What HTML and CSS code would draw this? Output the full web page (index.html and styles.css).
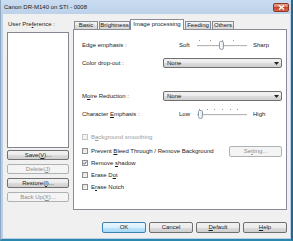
FILE: index.html
```html
<!DOCTYPE html>
<html>
<head>
<meta charset="utf-8">
<link rel="stylesheet" href="styles.css">
</head>
<body>
<div class="window">
  <div class="titlebar">
    <span class="title">Canon DR-M140 on STI - 0008</span>
    <span class="close"><svg width="7" height="5" viewBox="0 0 7 5"><path d="M1 0.5 L6 4.5 M6 0.5 L1 4.5" stroke="#fff" stroke-width="1.4"/></svg></span>
  </div>
  <div class="client">
    <div class="main">
      <div class="side">
        <div class="side-label">User Pre<u>f</u>erence :</div>
        <div class="listbox"></div>
        <div class="side-btns">
          <div class="btn">Save(<u>V</u>)...</div>
          <div class="btn disabled">Delete(<u>J</u>)</div>
          <div class="btn">Restore(<u>I</u>)...</div>
          <div class="btn disabled">Back Up(<u>X</u>)...</div>
        </div>
      </div>
      <div class="tabctl">
        <div class="tabrow">
          <div class="tab w-basic">Basic</div>
          <div class="tab w-bright">Brightness</div>
          <div class="tab active w-image">Image processing</div>
          <div class="tab w-feed">Feeding</div>
          <div class="tab w-other">Others</div>
        </div>
        <div class="panel">
          <div class="row r-edge">
            <div class="lbl">Edge emphasis :</div>
            <div class="ctl slider-ctl">
              <span class="end">Soft</span>
              <div class="slider">
                <div class="ticks t5"></div>
                <div class="track"></div>
                <div class="thumb mid"></div>
              </div>
              <span class="end-r">Sharp</span>
            </div>
          </div>
          <div class="row r-color">
            <div class="lbl">Color drop-out :</div>
            <div class="ctl"><div class="select"><span>None</span><svg width="5" height="3" viewBox="0 0 5 3"><path d="M0 0 H5 L2.5 3 Z" fill="#222"/></svg></div></div>
          </div>
          <div class="row r-moire">
            <div class="lbl">M<u>o</u>ire Reduction :</div>
            <div class="ctl"><div class="select"><span>None</span><svg width="5" height="3" viewBox="0 0 5 3"><path d="M0 0 H5 L2.5 3 Z" fill="#222"/></svg></div></div>
          </div>
          <div class="row r-char">
            <div class="lbl">Character <u>E</u>mphasis :</div>
            <div class="ctl slider-ctl">
              <span class="end">Low</span>
              <div class="slider">
                <div class="ticks t7"></div>
                <div class="track"></div>
                <div class="thumb low"></div>
              </div>
              <span class="end-r">High</span>
            </div>
          </div>
          <div class="row check-row c1 disabled-row">
            <span class="box"></span><span>B<u>a</u>ckground smoothing</span>
          </div>
          <div class="row check-row c2">
            <span class="box"></span><span class="grow">Prevent <u>B</u>leed Through / Remove Background</span>
            <div class="btn disabled setting">Se<u>t</u>ting...</div>
          </div>
          <div class="row check-row">
            <span class="box checked"><svg width="6" height="6" viewBox="0 0 6 6"><path d="M0.8 3.2 L2.3 4.8 L5.3 0.9" fill="none" stroke="#2f4d8a" stroke-width="1.3"/></svg></span><span>Remove <u>s</u>hadow</span>
          </div>
          <div class="row check-row">
            <span class="box"></span><span>Erase D<u>o</u>t</span>
          </div>
          <div class="row check-row">
            <span class="box"></span><span>E<u>r</u>ase Notch</span>
          </div>
        </div>
      </div>
    </div>
    <div class="footer">
      <div class="btn def">OK</div>
      <div class="btn">Cancel</div>
      <div class="btn"><u>D</u>efault</div>
      <div class="btn"><u>H</u>elp</div>
    </div>
  </div>
</div>
</body>
</html>
```
FILE: styles.css
```css
* { box-sizing: border-box; }
html, body { margin: 0; padding: 0; }
body {
  width: 293px; height: 241px; overflow: hidden;
  font-family: "Liberation Sans", Arial, sans-serif;
  font-size: 6px; color: #1c1c1c; background: #fff;
}
u { text-decoration: underline; text-underline-offset: 1px; }
.window {
  width: 293px; height: 241px;
  display: flex; flex-direction: column;
  background: linear-gradient(#cadcf0, #bcd2ea 14px, #b9cfe7);
  border-left: 1px solid #8ea6bf;
  border-right: 2px solid #24688d;
  border-bottom: 2px solid #2a87ad;
  padding: 0 1px 1px 2px;
}
.titlebar {
  height: 14px; flex: none;
  display: flex; align-items: flex-start; justify-content: space-between;
}
.title { padding: 4px 0 0 1px; line-height: 7px; color: #1a1a1a; }
.close {
  margin: 3px 1px 0 0; width: 16px; height: 9px;
  border: 1px solid #8b3a2c; border-radius: 2px;
  background: linear-gradient(#e9a393, #d7715a 50%, #c9452b 50%, #d4694c);
  display: flex; align-items: center; justify-content: center;
}
.client {
  flex: 1; background: #f0f0f0;
  display: flex; flex-direction: column;
}
.main { display: flex; gap: 4px; padding: 5px 0 0 4px; }
.side { width: 62px; display: flex; flex-direction: column; }
.side-label { height: 10px; line-height: 10px; padding-left: 1px; }
.listbox {
  margin-top: 3px; height: 116px;
  background: #fff; border: 1px solid #828790;
}
.side-btns { margin-top: 2px; display: flex; flex-direction: column; gap: 4px; }
.btn {
  height: 10px; line-height: 8px; text-align: center;
  border: 1px solid #707070; border-radius: 2px;
  background: linear-gradient(#f2f2f2, #ebebeb 50%, #dddddd 50%, #cfcfcf);
  color: #1c1c1c; white-space: nowrap;
}
.btn.disabled {
  border-color: #adb2b5; background: #f4f4f4; color: #8f8f8f;
}
.btn.def {
  border-color: #3c7fb1;
  background: linear-gradient(#eaf6fd, #d9f0fc 50%, #bee6fd 50%, #a7d9f5);
}
.tabctl { width: 214px; display: flex; flex-direction: column; }
.tabrow {
  height: 10px; display: flex; align-items: flex-end;
  padding-left: 1px; position: relative; z-index: 1;
}
.tab {
  height: 8px; line-height: 7px; text-align: center;
  border: 1px solid #898c95; border-bottom: none;
  background: linear-gradient(#f4f4f4, #e9e9e9 50%, #dedede 50%, #d6d6d6);
  margin-right: 1px; white-space: nowrap;
}
.tab.active {
  height: 11px; line-height: 9px; margin-bottom: -1px;
  background: #fff; margin-right: 0; margin-left: -1px;
}
.w-basic { width: 24px; }
.w-bright { width: 31px; }
.w-image { width: 54px; }
.w-feed { width: 26px; margin-left: 1px; }
.w-other { width: 22px; }
.panel {
  height: 181px; background: #fff;
  border: 1px solid #898c95;
  padding: 9px 4px 0 8px;
  display: flex; flex-direction: column;
}
.row { height: 12px; display: flex; align-items: center; flex: none; }
.lbl { width: 81px; }
.ctl { flex: 1; display: flex; align-items: center; }
.r-color, .r-char { margin-top: 6px; }
.r-moire { margin-top: 21px; }
.slider-ctl { padding-left: 16px; }
.end { width: 18px; }
.end-r { margin-left: 6px; }
.slider { position: relative; width: 50px; height: 12px; }
.track {
  position: absolute; left: 0; right: 0; top: 6px; height: 2px;
  border-top: 1px solid #b4b4b4; border-bottom: 1px solid #f4f4f4;
  background: #e6e6e6;
}
.ticks {
  position: absolute; left: 2px; right: 2px; top: 1px; height: 1px;
}
.ticks.t5 { background: repeating-linear-gradient(90deg, #9a9a9a 0 1px, transparent 1px 11.5px); }
.ticks.t7 { background: repeating-linear-gradient(90deg, #9a9a9a 0 1px, transparent 1px 7.66px); }
.thumb {
  position: absolute; top: 2px; width: 5px; height: 9px;
  border: 1px solid #8a9aa8; border-radius: 2px 2px 3px 3px;
  background: linear-gradient(90deg, #ffffff, #e4e8ec);
}
.thumb.mid { left: 22px; }
.thumb.low { left: 1px; }
.select {
  width: 119px; height: 10px;
  border: 1px solid #707070; border-radius: 2px;
  background: linear-gradient(#f2f2f2, #ebebeb 50%, #dddddd 50%, #cfcfcf);
  display: flex; align-items: center; justify-content: space-between;
  padding: 0 2px 0 3px; line-height: 8px;
}
.check-row { gap: 3px; }
.c1 { margin-top: 11px; }
.c2 { margin-top: 2px; }
.box {
  width: 6px; height: 6px; flex: none;
  border: 1px solid #8e8f8f;
  background: linear-gradient(135deg, #dcdcdc, #fbfbfb);
  display: flex; align-items: center; justify-content: center;
}
.box svg { display: block; }
.disabled-row { color: #9a9a9a; }
.disabled-row .box { border-color: #c4c4c4; background: #f4f4f4; }
.grow { flex: 1; }
.setting { width: 53px; height: 11px; line-height: 9px; }
.footer {
  margin-top: 12px; display: flex; justify-content: flex-end;
  gap: 3px; padding-right: 3px;
}
.footer .btn { width: 44px; height: 11px; line-height: 9px; }
```
